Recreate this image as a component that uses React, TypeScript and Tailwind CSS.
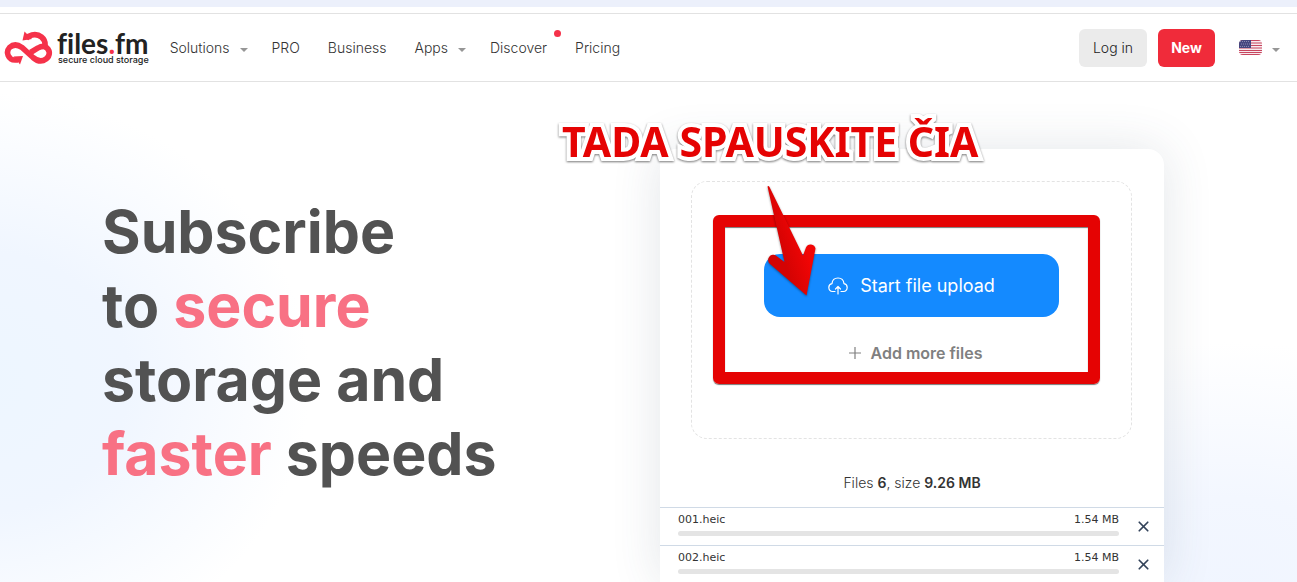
import { X } from 'lucide-react';

const NAV = [
  { label: 'Solutions', menu: true },
  { label: 'PRO' },
  { label: 'Business' },
  { label: 'Apps', menu: true },
  { label: 'Discover', dot: true },
  { label: 'Pricing' },
];

const FILES = [
  { name: '001.heic', size: '1.54 MB' },
  { name: '002.heic', size: '1.54 MB' },
];

export default function App() {
  return (
    <div className="flex h-screen flex-col overflow-hidden bg-white font-['Inter',sans-serif] text-[#333]">
      <div className="h-[7px] shrink-0 bg-[#ecf0fb]" />
      <Header />
      <main className="flex flex-1 justify-between bg-[radial-gradient(ellipse_330px_290px_at_-20px_300px,#edf6ff_0%,#f0f6ff_45%,#ffffff00_100%),radial-gradient(ellipse_340px_260px_at_1230px_520px,#f0f5ff_0%,#f3f7ff_40%,#ffffff00_100%)] pr-[133px] pl-[102px]">
        <h1 className="pt-[113px] text-[59px] leading-[74px] font-bold text-[#525252]">
          Subscribe
          <br />
          to <span className="text-[#f87184]">secure</span>
          <br />
          storage and
          <br />
          <span className="text-[#f87184]">faster</span> speeds
        </h1>
        <UploadCard />
      </main>
    </div>
  );
}

function Header() {
  return (
    <header className="mt-1.5 flex h-[69px] shrink-0 items-center border-y border-[#e2e2e2] pr-[17px] pl-1">
      <a href="#" className="flex items-center gap-1">
        <LogoMark />
        <span className="flex flex-col text-[#222]">
          <span className="font-['Lato',sans-serif] text-[28px] leading-6 font-bold [font-variant-ligatures:none]">
            files<span className="text-[#f5324a]">.</span>fm
          </span>
          <span className="pl-px text-[9px] leading-[10px] font-medium">secure cloud storage</span>
        </span>
      </a>
      <nav className="ml-[21px] flex items-center gap-7 text-sm font-light">
        {NAV.map((item) => (
          <a key={item.label} href="#" className="relative flex items-center gap-2.5">
            {item.label}
            {item.menu && (
              <span className="-mr-1">
                <Caret />
              </span>
            )}
            {item.dot && <span className="absolute -top-2 -right-3.5 size-[7px] rounded-full bg-[#f5324a]" />}
          </a>
        ))}
      </nav>
      <div className="ml-auto flex items-center">
        <button className="h-[38px] w-[68px] rounded-md bg-[#ebebeb] text-sm font-light text-[#222]">Log in</button>
        <button className="ml-[11px] h-[38px] w-[57px] rounded-md bg-[#f02b3a] text-sm font-bold text-white">New</button>
        <button aria-label="Language" className="ml-6 flex items-center gap-2.5">
          <Flag />
          <Caret />
        </button>
      </div>
    </header>
  );
}

function UploadCard() {
  return (
    <section className="mt-[67px] w-[504px] rounded-t-2xl bg-white shadow-[0_0_50px_rgba(60,75,100,0.14)]">
      <div className="relative mt-8 mr-8 ml-[31px] flex h-[258px] flex-col items-center rounded-2xl border border-dashed border-[#e3e3e3] pt-[72px]">
        <button className="flex h-[63px] w-[295px] items-center justify-center gap-3 rounded-2xl bg-[#148aff] text-lg text-white">
          <CloudUpload />
          Start file upload
        </button>
        <button className="mt-6 flex items-center gap-2.5 pl-2 text-base leading-6 font-semibold text-[#808080]">
          <svg viewBox="0 0 12 12" className="size-3" stroke="currentColor" strokeWidth="1.2">
            <path d="M6 0v12M0 6h12" />
          </svg>
          Add more files
        </button>
        <Annotation />
      </div>
      <p className="mt-8 text-center text-sm leading-6 font-light">
        Files <b className="font-semibold">6</b>, size <b className="font-semibold">9.26 MB</b>
      </p>
      <ul className="mt-3 font-['DejaVu_Sans',sans-serif] text-[11px] leading-4">
        {FILES.map((file) => (
          <li key={file.name} className="flex h-[38px] items-center gap-[19px] border-t border-[#d0dae6] pr-[15px] pl-[18px]">
            <div className="-mt-[5px] flex-1">
              <div className="flex justify-between">
                <span>{file.name}</span>
                <span>{file.size}</span>
              </div>
              <div className="mt-[3px] h-[5px] rounded-full bg-[#e4e4e4]" />
            </div>
            <button aria-label={`Remove ${file.name}`} className="text-[#33435a]">
              <X className="-mx-[3px] size-[17px]" strokeWidth={2.4} />
            </button>
          </li>
        ))}
      </ul>
    </section>
  );
}

// hand-drawn guide laid over the drop area: caption, frame and arrow
function Annotation() {
  return (
    <div className="pointer-events-none absolute inset-0">
      <div className="absolute top-[33px] left-[21px] h-[169px] w-[387px] rounded-md border-[12px] border-[#e50303] shadow-[0_1px_1px_#0008,inset_0_1px_1px_#0008]" />
      <svg viewBox="0 0 52 114" className="absolute top-[3px] left-[74px] h-[114px] w-[52px] drop-shadow-[0_1px_1px_#0006]">
        <defs>
          <linearGradient id="arrow" gradientUnits="userSpaceOnUse" x1="18" y1="76" x2="42" y2="68">
            <stop offset="0" stopColor="#d40303" />
            <stop offset="1" stopColor="#f20505" />
          </linearGradient>
        </defs>
        <path
          fill="url(#arrow)"
          d="M1.5 1.5Q2.5 .5 3.5 2L37 70.5L40 62.5A5 5 0 0 1 49.5 63.5L40.5 110.5L4 79A5 5 0 0 1 10.5 71L18.5 77Z"
        />
      </svg>
      <p className="absolute -top-[70px] -left-[130px] font-['Noto_Sans',sans-serif] text-[41px] leading-[58px] font-bold whitespace-nowrap text-[#e50303] drop-shadow-[0_1px_1px_#0008] [-webkit-text-stroke:8px_white] [paint-order:stroke_fill] [stroke-linejoin:round]">
        TADA SPAUSKITE ČIA
      </p>
    </div>
  );
}

function LogoMark() {
  return (
    <svg viewBox="4 30 49 36" className="h-9 w-[49px]" fill="none" stroke="#f5324a" strokeWidth="5.6">
      <path d="M18 60H15A7.500 7.500 0 0 1 9.500 47.500Q15 42.500 22 47.500L33 57.500Q40 63.500 46 59C51 55 50 49.500 45 46.500C46 38 39 33.500 32 35Q28 36 26 38.500" />
      <path d="M30.500 52.500L38 48Q41 46 46 46.500" />
      <path d="M24.500 31.500L22.500 40.500L32 39Z" fill="#f5324a" stroke="none" />
      <path d="M13.500 56.500L23 56L20 64.500Z" fill="#f5324a" stroke="none" />
    </svg>
  );
}

function Caret() {
  return (
    <svg viewBox="0 0 8 4" className="mt-1 h-1 w-2" fill="#969696">
      <path d="M0 0h8L4 4Z" />
    </svg>
  );
}

function CloudUpload() {
  return (
    <svg viewBox="0 0 20 18" className="h-[18px] w-5" fill="none" stroke="currentColor" strokeWidth="1.2" strokeLinecap="round" strokeLinejoin="round">
      <path d="M7 14.5H4.500A4 4 0 0 1 4 6.600C4.300 3 7 1 10 1S15.600 3 16 6.600A4 4 0 0 1 15.500 14.500H13" />
      <path d="M10 17V9.500M7.500 12L10 9.500L12.500 12" />
    </svg>
  );
}

function Flag() {
  return (
    <svg viewBox="0 0 23 15" className="h-[15px] w-[23px] overflow-hidden rounded">
      <rect width="23" height="15" fill="#f7e9ed" />
      <path d="M0 .5h23M0 3h23M0 5.500h23M0 8h23M0 10.500h23M0 12.500h23M0 14.500h23" stroke="#c8465f" strokeWidth="1.1" />
      <rect width="12" height="8" fill="#46467f" />
      <path d="M1 1.500h10M2 4h9M1 6.500h10" stroke="#9a9abd" strokeWidth=".8" strokeDasharray="1 1" />
    </svg>
  );
}
